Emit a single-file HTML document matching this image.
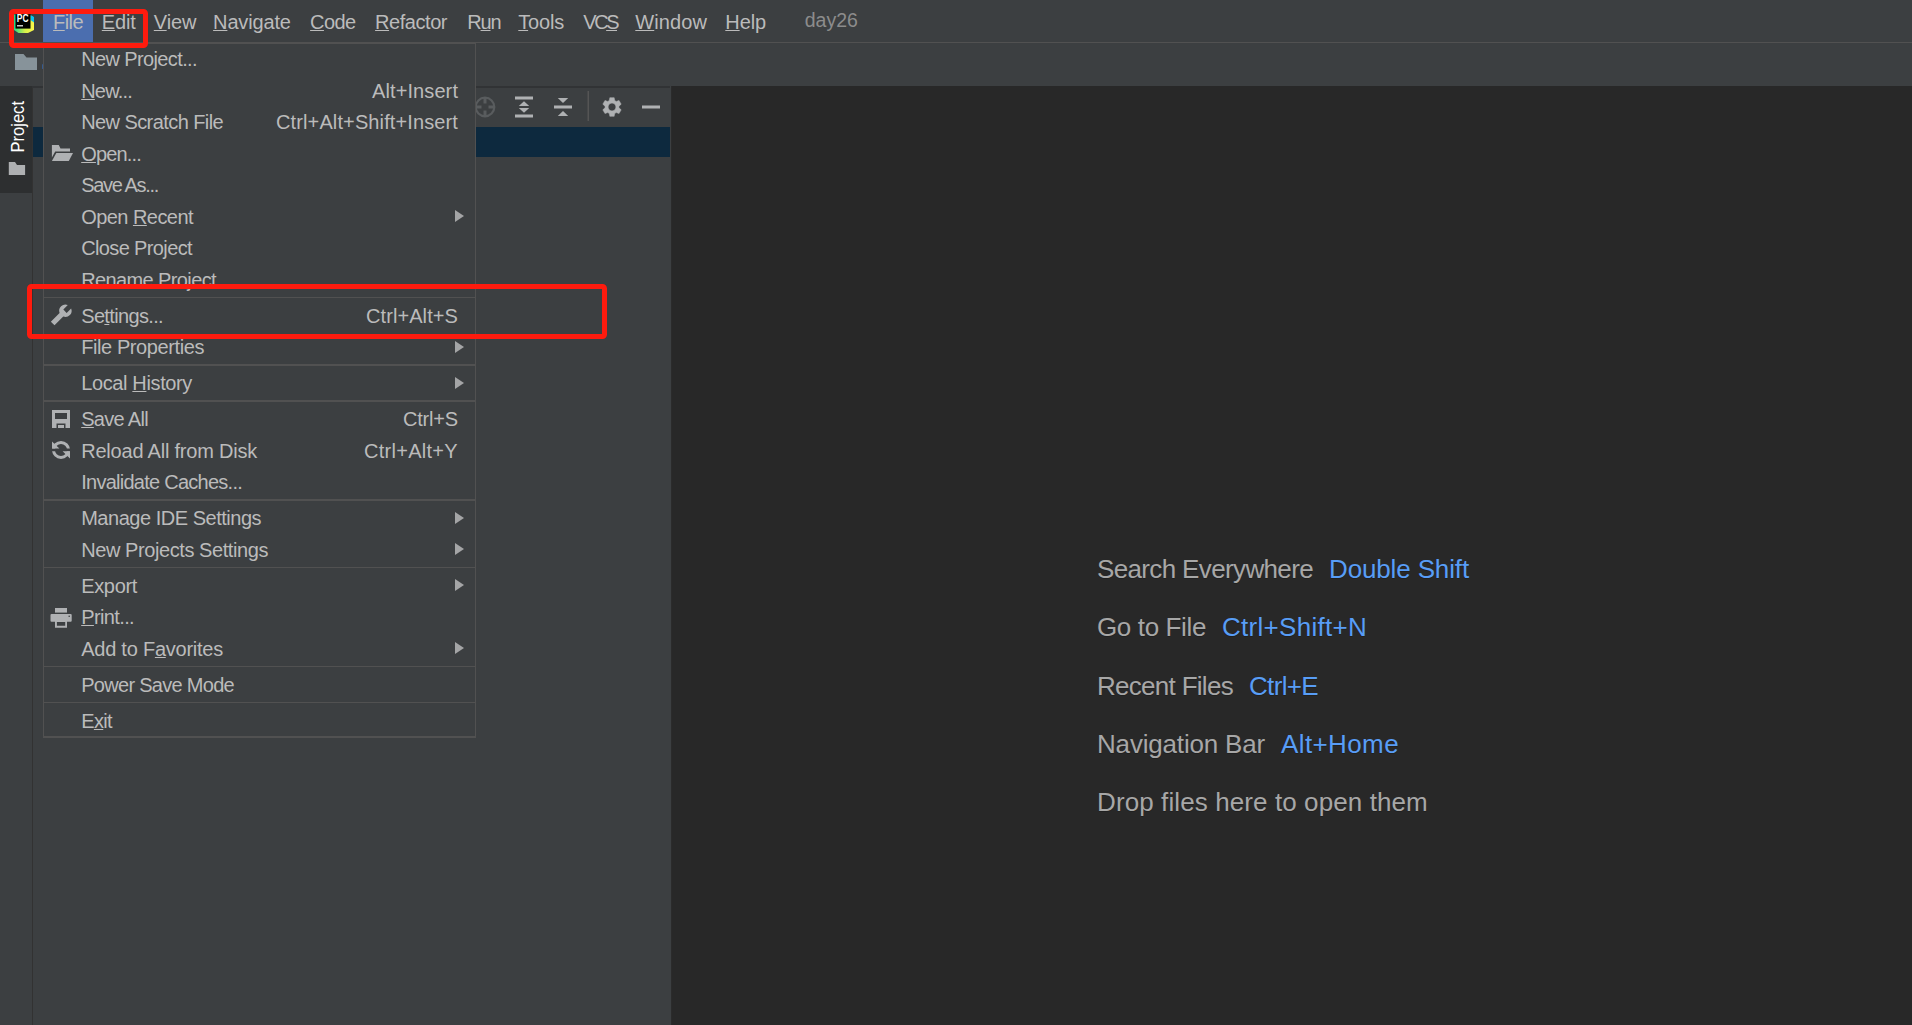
<!DOCTYPE html>
<html><head><meta charset="utf-8"><title>PyCharm - day26</title>
<style>
html,body{margin:0;padding:0;background:#3c3f41;}
body{width:1912px;height:1025px;position:relative;overflow:hidden;font-family:"Liberation Sans",sans-serif;}
.a{position:absolute;}
.t{position:absolute;white-space:pre;line-height:1;font-family:"Liberation Sans",sans-serif;}
.t u{text-decoration:underline;text-decoration-thickness:1.400px;text-underline-offset:1.200px;}
.sep{position:absolute;left:44px;width:431px;height:1px;background:#515151;}
.arr{position:absolute;left:455px;width:0;height:0;border-left:9px solid #a4a5a6;border-top:6px solid transparent;border-bottom:6px solid transparent;}
.red{position:absolute;border:5px solid #fe1b0e;border-radius:4.500px;box-sizing:border-box;}
</style></head><body>

<!-- editor area -->
<div class="a" style="left:671px;top:85px;width:1241px;height:940px;background:#282828;border-top:1px solid #323232;border-left:1px solid #2b2b2b;box-sizing:border-box"></div>

<!-- menu bar -->
<div class="a" style="left:0;top:0;width:1912px;height:42px;background:#3c3f41"></div>
<div class="a" style="left:0;top:42px;width:1912px;height:1px;background:#515151"></div>
<div class="a" style="left:43px;top:0;width:50px;height:42px;background:#4b6eaf"></div>

<!-- nav bar -->
<div class="a" style="left:0;top:43px;width:1912px;height:43px;background:#3c3f41"></div>
<div class="a" style="left:0;top:86px;width:670px;height:2px;background:#313335"></div>
<svg class="a" style="left:14px;top:53px" width="24" height="18" viewBox="0 0 24 18"><path d="M1 1h8.5l3 3.5H23V17H1z" fill="#87939a"/></svg>
<div class="a" style="left:41.500px;top:64px;width:1.500px;height:5px;background:#355a8e;border-radius:1px"></div>

<!-- tool stripe -->
<div class="a" style="left:0;top:88px;width:32px;height:937px;background:#3c3f41"></div>
<div class="a" style="left:32px;top:88px;width:1px;height:937px;background:#323232"></div>
<div class="a" style="left:0;top:86px;width:32px;height:107px;background:#2d2f30"></div>
<svg class="a" style="left:0;top:86px" width="32" height="108" viewBox="0 0 32 108">
<text x="0" y="0" transform="translate(23.800,66.500) rotate(-90)" font-family="Liberation Sans, sans-serif" font-size="18" fill="#ffffff" textLength="51.500" lengthAdjust="spacingAndGlyphs">Project</text>
<path d="M8.800 76h6.200l2 3h8.100v10H8.800z" fill="#aeb0b2"/>
</svg>

<!-- project panel -->
<div class="a" style="left:33px;top:127px;width:637px;height:30px;background:#0d293e"></div>

<!-- project toolbar icons -->
<svg class="a" style="left:470px;top:88px" width="200" height="39" viewBox="470 88 200 39">
 <g fill="none" stroke="#595c5e" stroke-width="2.200"><circle cx="485" cy="107" r="9.300"/><path d="M485 97v6.500M485 110.500v6.500M475 107h6.500M488.500 107h6.500" stroke-width="3"/></g>
 <g fill="#afb1b3">
  <rect x="515" y="96.5" width="18" height="3"/><rect x="515" y="114.5" width="18" height="3"/>
  <path d="M524 101.2l5.2 4.8h-10.4zM524 112.8l5.2-4.8h-10.4z"/>
  <rect x="554" y="105.5" width="18" height="3"/>
  <path d="M563 103l5.2-4.9h-10.4zM563 111l5.2 4.9h-10.4z"/>
  <rect x="642" y="105.5" width="18" height="3"/>
 </g>
 <rect x="587.5" y="91" width="1.5" height="30" fill="#555555"/>
 <g transform="translate(612,107)" fill="#afb1b3">
  <path fill-rule="evenodd" stroke="#afb1b3" stroke-width=".5" stroke-linejoin="round" d="M-2.74,-6.44L-2.16,-9.35L2.16,-9.35L2.74,-6.44L4.21,-5.59L7.02,-6.55L9.18,-2.81L6.95,-0.85L6.95,0.85L9.18,2.81L7.02,6.55L4.21,5.59L2.74,6.44L2.16,9.35L-2.16,9.35L-2.74,6.44L-4.21,5.59L-7.02,6.55L-9.18,2.81L-6.95,0.85L-6.95,-0.85L-9.18,-2.81L-7.02,-6.55L-4.21,-5.59zM0,-3.9a3.9,3.9 0 1 0 .01,0z"/>
 </g>
</svg>

<!-- popup menu -->
<div class="a" style="left:43px;top:43px;width:433px;height:695px;background:#3c3f41;border:1px solid #515151;border-bottom-width:2px;box-sizing:border-box"></div>
<div class="sep" style="top:297px"></div>
<div class="sep" style="top:364px;height:2px"></div>
<div class="sep" style="top:400px;height:2px"></div>
<div class="sep" style="top:499px;height:2px"></div>
<div class="sep" style="top:567px"></div>
<div class="sep" style="top:666px"></div>
<div class="sep" style="top:702px"></div>
<div class="arr" style="top:210px"></div>
<div class="arr" style="top:341px"></div>
<div class="arr" style="top:377px"></div>
<div class="arr" style="top:512px"></div>
<div class="arr" style="top:543px"></div>
<div class="arr" style="top:579px"></div>
<div class="arr" style="top:642px"></div>

<!-- popup icons -->
<svg class="a" style="left:46px;top:138px" width="34" height="32" viewBox="46 138 34 32"><g fill="#afb1b3"><path d="M51.900 145h6.900l1.700 3.500H70v2.900H55.200L51.900 157.400z"/><path d="M56.300 153H73L68.800 160.900H51.900z"/></g></svg>
<svg class="a" style="left:46px;top:300px" width="34" height="32" viewBox="46 300 34 32"><g transform="translate(65.400,310.800) rotate(-45)"><path d="M-18,-2.600H-5.630A6.200,6.200 0 0 1 5.740,-2.350H-0.600V2.350H5.740A6.200,6.200 0 0 1 -5.630,2.600H-18z" fill="#afb1b3"/></g></svg>
<svg class="a" style="left:46px;top:404px" width="34" height="64" viewBox="46 404 34 64"><g fill="#afb1b3">
 <path fill-rule="evenodd" d="M52 410h18v18H65.500v-4.500h-9V428H52zM55 413v6h12v-6z"/>
 <rect x="58" y="425" width="6" height="3"/>
 <path d="M52 441.400V448.600H59.400zM70 458.400V451.200H62.600z"/>
</g>
<clipPath id="cu"><rect x="46" y="436" width="34" height="12.600"/></clipPath>
<clipPath id="cl"><rect x="46" y="451.200" width="34" height="12"/></clipPath>
<circle cx="61" cy="449.900" r="7.500" fill="none" stroke="#afb1b3" stroke-width="3" clip-path="url(#cu)"/>
<circle cx="61" cy="449.900" r="7.500" fill="none" stroke="#afb1b3" stroke-width="3" clip-path="url(#cl)"/>
</svg>
<svg class="a" style="left:46px;top:600px" width="34" height="34" viewBox="46 600 34 34"><g fill="#afb1b3">
 <rect x="55" y="608" width="12" height="4.600"/>
 <rect x="50.500" y="614" width="21.200" height="7.700" rx="1"/>
 <path fill-rule="evenodd" d="M55 620h12v7.700H55zM56.900 621.900v3.800h8.300v-3.800z"/>
</g><circle cx="69.200" cy="616.300" r=".8" fill="#3c3f41"/></svg>

<span class="t" style="left:53.1px;top:12.0px;font-size:20px;letter-spacing:-0.58px;color:#bbbbbb"><u>F</u>ile</span>
<span class="t" style="left:101.8px;top:12.0px;font-size:20px;letter-spacing:-0.12px;color:#bbbbbb"><u>E</u>dit</span>
<span class="t" style="left:153.8px;top:12.0px;font-size:20px;letter-spacing:-0.12px;color:#bbbbbb"><u>V</u>iew</span>
<span class="t" style="left:213.1px;top:12.0px;font-size:20px;letter-spacing:-0.15px;color:#bbbbbb"><u>N</u>avigate</span>
<span class="t" style="left:310.1px;top:12.0px;font-size:20px;letter-spacing:-0.60px;color:#bbbbbb"><u>C</u>ode</span>
<span class="t" style="left:375.1px;top:12.0px;font-size:20px;letter-spacing:-0.46px;color:#bbbbbb"><u>R</u>efactor</span>
<span class="t" style="left:467.3px;top:12.0px;font-size:20px;letter-spacing:-1.17px;color:#bbbbbb">R<u>u</u>n</span>
<span class="t" style="left:518.3px;top:12.0px;font-size:20px;letter-spacing:-0.20px;color:#bbbbbb"><u>T</u>ools</span>
<span class="t" style="left:583.3px;top:12.0px;font-size:20px;letter-spacing:-2.47px;color:#bbbbbb">VC<u>S</u></span>
<span class="t" style="left:635.3px;top:12.0px;font-size:20px;letter-spacing:0.09px;color:#bbbbbb"><u>W</u>indow</span>
<span class="t" style="left:725.3px;top:12.0px;font-size:20px;letter-spacing:-0.11px;color:#bbbbbb"><u>H</u>elp</span>
<span class="t" style="left:804.7px;top:11.0px;font-size:19.5px;letter-spacing:0.03px;color:#8c8c8c">day26</span>
<span class="t" style="left:81.2px;top:49.0px;font-size:20px;letter-spacing:-0.62px;color:#bbbbbb">New Project...</span>
<span class="t" style="left:81.2px;top:81.0px;font-size:20px;letter-spacing:-0.80px;color:#bbbbbb"><u>N</u>ew...</span>
<span class="t" style="left:372.0px;top:81.0px;font-size:20px;letter-spacing:0.10px;color:#bbbbbb">Alt+Insert</span>
<span class="t" style="left:81.2px;top:112.0px;font-size:20px;letter-spacing:-0.58px;color:#bbbbbb">New Scratch File</span>
<span class="t" style="left:276.0px;top:112.0px;font-size:20px;letter-spacing:0.12px;color:#bbbbbb">Ctrl+Alt+Shift+Insert</span>
<span class="t" style="left:81.2px;top:144.0px;font-size:20px;letter-spacing:-0.83px;color:#bbbbbb"><u>O</u>pen...</span>
<span class="t" style="left:81.2px;top:175.0px;font-size:20px;letter-spacing:-1.33px;color:#bbbbbb">Save As...</span>
<span class="t" style="left:81.2px;top:207.0px;font-size:20px;letter-spacing:-0.55px;color:#bbbbbb">Open <u>R</u>ecent</span>
<span class="t" style="left:81.2px;top:238.0px;font-size:20px;letter-spacing:-0.63px;color:#bbbbbb">Close Project</span>
<span class="t" style="left:81.2px;top:270.0px;font-size:20px;letter-spacing:-0.61px;color:#bbbbbb">Rename Project</span>
<span class="t" style="left:81.2px;top:306.0px;font-size:20px;letter-spacing:-0.65px;color:#bbbbbb">Se<u>t</u>tings...</span>
<span class="t" style="left:366.0px;top:306.0px;font-size:20px;letter-spacing:0.08px;color:#bbbbbb">Ctrl+Alt+S</span>
<span class="t" style="left:81.2px;top:337.0px;font-size:20px;letter-spacing:-0.41px;color:#bbbbbb">File Properties</span>
<span class="t" style="left:81.2px;top:373.0px;font-size:20px;letter-spacing:-0.37px;color:#bbbbbb">Local <u>H</u>istory</span>
<span class="t" style="left:81.2px;top:409.0px;font-size:20px;letter-spacing:-0.68px;color:#bbbbbb"><u>S</u>ave All</span>
<span class="t" style="left:403.0px;top:409.0px;font-size:20px;letter-spacing:-0.19px;color:#bbbbbb">Ctrl+S</span>
<span class="t" style="left:81.2px;top:441.0px;font-size:20px;letter-spacing:-0.21px;color:#bbbbbb">Reload All from Disk</span>
<span class="t" style="left:364.0px;top:441.0px;font-size:20px;letter-spacing:0.28px;color:#bbbbbb">Ctrl+Alt+Y</span>
<span class="t" style="left:81.2px;top:472.0px;font-size:20px;letter-spacing:-0.74px;color:#bbbbbb">Invalidate Caches...</span>
<span class="t" style="left:81.2px;top:508.0px;font-size:20px;letter-spacing:-0.48px;color:#bbbbbb">Manage IDE Settings</span>
<span class="t" style="left:81.2px;top:540.0px;font-size:20px;letter-spacing:-0.42px;color:#bbbbbb">New Projects Settings</span>
<span class="t" style="left:81.2px;top:576.0px;font-size:20px;letter-spacing:-0.34px;color:#bbbbbb">Export</span>
<span class="t" style="left:81.2px;top:607.0px;font-size:20px;letter-spacing:-0.62px;color:#bbbbbb"><u>P</u>rint...</span>
<span class="t" style="left:81.2px;top:639.0px;font-size:20px;letter-spacing:-0.24px;color:#bbbbbb">Add to F<u>a</u>vorites</span>
<span class="t" style="left:81.2px;top:675.0px;font-size:20px;letter-spacing:-0.71px;color:#bbbbbb">Power Save Mode</span>
<span class="t" style="left:81.2px;top:711.0px;font-size:20px;letter-spacing:-0.64px;color:#bbbbbb">E<u>x</u>it</span>
<span class="t" style="left:1097.0px;top:556.0px;font-size:26px;letter-spacing:-0.64px;color:#a7a7a7;text-shadow:0 1px 0 #202020">Search Everywhere</span>
<span class="t" style="left:1329.0px;top:556.0px;font-size:26px;letter-spacing:-0.14px;color:#589df6;text-shadow:0 1px 0 #202020">Double Shift</span>
<span class="t" style="left:1097.0px;top:614.0px;font-size:26px;letter-spacing:-0.37px;color:#a7a7a7;text-shadow:0 1px 0 #202020">Go to File</span>
<span class="t" style="left:1222.0px;top:614.0px;font-size:26px;letter-spacing:0.28px;color:#589df6;text-shadow:0 1px 0 #202020">Ctrl+Shift+N</span>
<span class="t" style="left:1097.0px;top:673.0px;font-size:26px;letter-spacing:-0.71px;color:#a7a7a7;text-shadow:0 1px 0 #202020">Recent Files</span>
<span class="t" style="left:1249.0px;top:673.0px;font-size:26px;letter-spacing:-0.66px;color:#589df6;text-shadow:0 1px 0 #202020">Ctrl+E</span>
<span class="t" style="left:1097.0px;top:731.0px;font-size:26px;letter-spacing:-0.18px;color:#a7a7a7;text-shadow:0 1px 0 #202020">Navigation Bar</span>
<span class="t" style="left:1281.0px;top:731.0px;font-size:26px;letter-spacing:0.39px;color:#589df6;text-shadow:0 1px 0 #202020">Alt+Home</span>
<span class="t" style="left:1097.0px;top:789.0px;font-size:26px;letter-spacing:0.10px;color:#a7a7a7;text-shadow:0 1px 0 #202020">Drop files here to open them</span>

<!-- logo -->
<svg class="a" style="left:12px;top:12px" width="24" height="22" viewBox="12 12 24 22">
 <defs><linearGradient id="lg" x1="0" y1="0" x2="1" y2="0"><stop offset="0" stop-color="#21d789"/><stop offset=".55" stop-color="#d6f04a"/><stop offset="1" stop-color="#fcf84a"/></linearGradient></defs>
 <path d="M14 14.500h14.500l5.500 3V30l-6 3H18.500L14 30z" fill="url(#lg)"/>
 <path d="M30.500 15l3.500 2v5.500l-3.500-2.500z" fill="#07c3f2"/>
 <rect x="15.500" y="14.200" width="15" height="14.400" fill="#000"/>
 <text x="16.800" y="21.900" font-family="Liberation Sans, sans-serif" font-weight="bold" font-size="10.300" fill="#fff" textLength="11.800" lengthAdjust="spacingAndGlyphs">PC</text>
 <rect x="17" y="25" width="6" height="1.500" fill="#c8c8c8"/>
</svg>

<!-- red annotations -->
<div class="red" style="left:9px;top:9px;width:139px;height:39px"></div>
<div class="red" style="left:27px;top:284px;width:580px;height:55px"></div>

</body></html>
